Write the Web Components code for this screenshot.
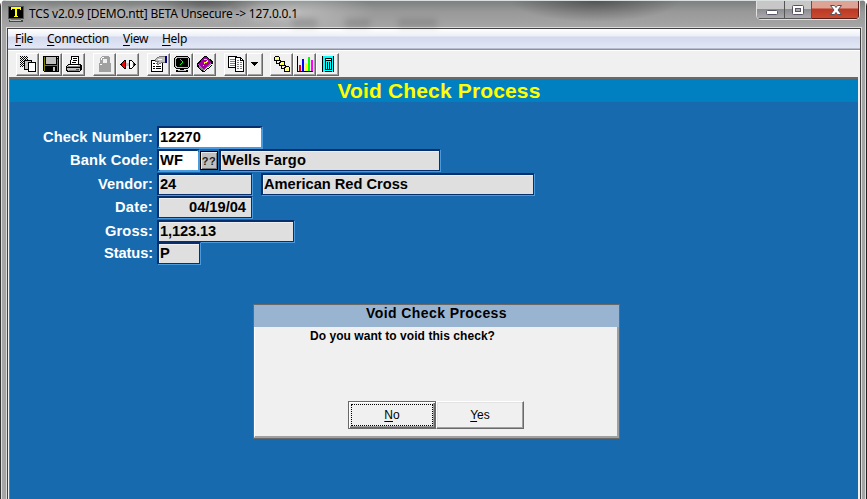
<!DOCTYPE html>
<html lang="en"><head><meta charset="utf-8"><title>TCS v2.0.9</title>
<style>html,body{margin:0;width:867px;height:499px;overflow:hidden}</style></head>
<body>
<tcs-window></tcs-window>
<script>
const define = (name, html, setup) => customElements.define(name, class extends HTMLElement {
  connectedCallback() {
    if (this.shadowRoot) return;
    this.attachShadow({mode:'open'}).innerHTML = html;
    if (setup) setup(this, this.shadowRoot);
  }
});

// Text set to a fixed advance width through letter spacing.
define('fit-text', `<style>:host{display:inline-block;white-space:pre}span{display:inline-block}</style><span><slot></slot></span>`, (el, root) => {
  const s = root.querySelector('span'), n = el.textContent.length, w = +el.getAttribute('w');
  el.style.width = w + 'px';
  s.style.letterSpacing = (w - s.getBoundingClientRect().width) / n + 'px';
});

const icons = {
app:`<path fill="#555" d="M0 0h16v13H0z"/><path fill="#000" d="M1 1h14v11H1z"/><path fill="#777" d="M3 13h10v1H3z"/><path fill="#444" d="M1 14h14v2H1z"/><path fill="#bbb" d="M2 14h11v1H2z"/><path fill="#ff0" d="M3 1h10v3h-1v-1H9v7h1v1H6v-1h1V3H4v1H3z"/>`,
copy:`<path stroke="#000" stroke-dasharray="1 1" d="M0 .5h8M0 2.5h8M0 4.5h8M0 6.5h5M0 8.5h5M0 10.5h5"/><path stroke="#000" stroke-dasharray="1 1" stroke-dashoffset="1" d="M0 1.5h9M0 3.5h8M0 5.5h5M0 7.5h5M0 9.5h5"/><path fill="#c0c0c0" stroke="#000" d="M4.5 4.5h7v9h-7z"/><path fill="#fff" stroke="#000" d="M8.500 6.500h7v9h-7z"/>`,
save:`<path fill="#000" d="M0 0h16v16H1L0 15z"/><path fill="#808000" d="M1 1h1v14H1zM14 3h1v12h-1zM2 9h12v1H2z"/><path fill="#c0c0c0" d="M3 1h10v7H3zM14 1h1v1h-1zM10 11h2v4h-2z"/>`,
print:`<path fill="#fff" stroke="#000" d="M5.500.5h7v8h-8z"/><path stroke="#000" d="M7 2.500h4M7 4.500h4M6 6.500h4"/><path fill="#c0c0c0" stroke="#000" d="M2.500 8.500h12l1 2v3l-2 2h-12l-1-2v-3z"/><path stroke="#808080" d="M2 10.500h12M3 14.500h10"/><path stroke="#000" d="M1 11.500h13M14.500 9v5"/><path stroke="#f00" d="M10 13.500h3"/><path stroke="#fff" d="M3 9.500h9"/>`,
lock:`<path fill="#a0a0a0" fill-rule="evenodd" d="M5 0h6l2 2v5h1v9H2V7h1V2zM6 3v4h4V3z"/><path stroke="#fff" d="M5 1.500h2M4.500 2v2M3 8.500h2"/>`,
plug:`<path fill="#f00" d="M1 7h1V6h1V5h2v7H3v-1H2v-1H1zM15 7h-1V6h-1v5h1v-1h1z"/><path stroke="#000" d="M0 8.500h1M1.500 7v3M2.500 6v1M2.500 10v1M3 5.500h1M3 11.500h1M4 4.500h2M4 12.500h2M5.500 4v9M9.500 4v9M9 4.500h3M9 12.500h3M12 5.500h1M12 11.500h1M13.500 6v1M13.500 10v1M14.500 7v3M15 8.500h1"/><path fill="#fff" d="M10 5h2v7h-2z"/><path fill="#c0c0c0" d="M6 7h3v3H6z"/>`,
props:`<path fill="#fff" stroke="#000" d="M.5 4.500h11v11H.5z"/><path stroke="#000" d="M2 7.500h2M2 10.500h2M5 10.500h5M2 12.500h2M5 12.500h5"/><path fill="#c0c0c0" stroke="#777" d="M5.500 2.500l3-2h6v6h-4l-3 2-2-1 2-2h-3v-2z"/><path stroke="#fff" d="M7 3.500h4"/><path stroke="#000080" stroke-width="2" d="M15 0v7"/>`,
monitor:`<path fill="#c0c0c0" stroke="#000" d="M2.500.5h11l2 2v8l-2 2h-11l-2-2v-8z"/><path fill="#000" d="M3 2h10l1 1v7l-1 1H3l-1-1V3zM6 12h4v2H6zM2 14h12v2H2z"/><path fill="#c0c0c0" d="M4 14h8v1H4z"/><path fill="#0f0" d="M6 3h1v1h1v1h1v2H8v1H7v1H6V8h1V7h1V5H7V4H6z"/>`,
book:`<path fill="#000" d="M7 0h2l7 5v2l-1 1v2l-8 6H5L0 11V8z"/><path fill="#808080" d="M2 9l5 4 7-6v2l-7 6-5-3z"/><path fill="#fff" d="M7 14l8-6v1l-8 6z"/><path fill="#a000a0" d="M7 1h2l6 5-8 7-6-4z"/><path stroke="#d05ee0" d="M1 8.500l3 2"/><path fill="#ff0" d="M7 3h3v1h1v2h-1v1H8v1H7V6h2V5h1V4H7zM6 9h1v1H6z"/>`,
pages:`<path fill="#fff" stroke="#000" d="M.5.500h8v11h-8z"/><path stroke="#808080" d="M2 3.500h5M2 5.500h5M2 7.500h5M2 9.500h5"/><path fill="#fff" stroke="#000" d="M7.500 1.500h5l3 3v11h-8z"/><path stroke="#808080" stroke-dasharray="2 1" d="M9 4.500h4M9 6.500h5M9 8.500h5M9 10.500h5M9 12.500h5"/><path stroke="#000" d="M12.500 1v3h3"/>`,
down:`<path d="M0 6h7v1H6v1H5v1H4v1H3V9H2V8H1V7H0z"/>`,
tree:`<path fill="#ffff80" stroke="#000" d="M1.500.500h3l1 1v3h-5v-3zM6.500 5.500h4v4h-5v-3zM11.500 10.500h3l1 1v4h-5v-4z"/><path stroke="#000" d="M0 4.500h6v2M5 9.500h6v2M2.500 5v2h3M7.500 10v2h3"/><path stroke="#ff0" d="M2 3.500h2M7 8.500h2M12 13.500h2"/>`,
bars:`<path stroke="#000" d="M.5 0v15.500H16"/><path fill="red" d="M2 9h2v6H2z"/><path fill="#00f" d="M5 3h2v12H5z"/><path fill="#ff0" d="M8 7h2v8H8z"/><path fill="#0f0" d="M11 1h2v14h-2z"/><path fill="#f0f" d="M14 4h2v11h-2z"/>`,
calc:`<path fill="#000" d="M2 0h12v16H2z"/><path fill="#0ff" d="M3 0h2v16H3zM12 0h1v16h-1zM3 0h10v2H3zM3 14h10v1H3z"/><path fill="#000" d="M5 2h7v12H5z"/><path fill="#ff0" d="M6 3h5v1H6z"/><path stroke="#0ff" d="M6.500 5v8M8.500 6v7M10.500 6v7M6 5.500h5"/>`
};
define('tcs-icon', `<style>:host{display:block;width:16px;height:16px}svg{display:block}</style><svg width="16" height="16" shape-rendering="crispEdges" fill="none"></svg>`, (el, r) => {
  const svg = r.querySelector('svg'); svg.innerHTML = icons[el.getAttribute('name')];
  if (el.getAttribute('name') === 'down') svg.setAttribute('fill', '#000');
});

define('title-bar', `<style>
:host{display:flex;height:27px;box-sizing:border-box;padding:0 1px 0 2px;align-items:flex-start;color:#000;font:12px "Noto Sans",sans-serif}
tcs-icon{margin:5px 5px 0 0}fit-text{margin-top:4px;line-height:17px;text-shadow:0 0 6px #ddd,0 0 8px #ccc}
.controls{margin-left:auto;display:flex;width:102px;height:18px;border:1px solid #e0e0e0;border-top:0;border-radius:0 0 5px 5px;overflow:hidden;box-shadow:inset 0 0 0 1px #555}
.controls div{height:18px;box-sizing:border-box;border:1px solid #555;border-width:0 1px 1px 0;background:linear-gradient(#c7c7c7 0 45%,#8d8d91 50%,#a9a9af)}
.min,.max{width:28px}.max{width:27px!important}.close{flex:1;background:linear-gradient(#dda496 0 40%,#bd3824 48%,#c94c30)!important;border-color:#5b1d18!important}
svg{display:block}</style>
<tcs-icon name="app"></tcs-icon><fit-text w="269">TCS v2.0.9 [DEMO.ntt] BETA Unsecure -&gt; 127.0.0.1</fit-text>
<div class="controls"><div class="min"><svg width="28" height="17"><rect x="9.500" y="9.500" width="11" height="4" rx="1" fill="#fff" stroke="#555566"/></svg></div><div class="max"><svg width="27" height="17"><rect x="7.500" y="4.500" width="11" height="9" rx="1" fill="#fff" stroke="#555566"/><rect x="10.500" y="7.500" width="5" height="3" fill="#aaa" stroke="#555566"/></svg></div><div class="close"><svg width="46" height="17"><path d="M18.500 4.500h4l1.500 2 1.500-2h4l-3.500 4.500 3.500 4.500h-4L24 11.500l-1.500 2h-4L22 9z" fill="#fff" stroke="#55505c"/></svg></div></div>`);

define('menu-bar', `<style>:host{display:flex;gap:14px;box-sizing:border-box;height:20px;padding-left:7px;background:linear-gradient(#fff,#eceff8 7px,#d4daec 8px,#e0e6f6 18px);border-bottom:1px solid #b6bccc;font:12px/20px "Noto Sans",sans-serif;color:#000}
u{text-underline-offset:2px}</style>
<fit-text w="18"><u>F</u>ile</fit-text><fit-text w="62"><u>C</u>onnection</fit-text><fit-text w="25"><u>V</u>iew</fit-text><fit-text w="25"><u>H</u>elp</fit-text>`);

define('tool-button', `<style>:host{display:block;box-sizing:border-box;width:23px;height:23px;padding:2px 3px 3px;border:1px solid;border-color:#fff #696969 #696969 #fff;box-shadow:inset -1px -1px #a0a0a0;background:#f0f0f0;overflow:hidden}
:host([icon=down]){width:16px;padding-left:3px}</style><tcs-icon></tcs-icon>`, (el, r) => {
  const i = document.createElement('tcs-icon'); i.setAttribute('name', el.getAttribute('icon')); r.querySelector('tcs-icon').replaceWith(i);
});

define('tool-bar', `<style>:host{display:flex;gap:8px;box-sizing:border-box;height:28px;border-top:1px solid #919191;box-shadow:inset 0 1px #fff;padding:3px 0 0 8px;background:#f0f0f0}div{display:flex}</style>`
 + [['copy','save','print'],['lock','plug'],['props','monitor','book'],['pages','down'],['tree','bars','calc']].map((g,i)=>`<div${i===4?' style="margin-left:-1px"':''}>`+g.map(n=>`<tool-button icon="${n}"></tool-button>`).join('')+'</div>').join(''));

define('data-field', `<style>:host{display:block;box-sizing:border-box;height:23px;border:1px solid;border-color:#062f6d #4a9ae0 #4a9ae0 #062f6d;padding:1px}
div{box-sizing:border-box;height:19px;padding-left:1px;background:#dfdfdf;font:bold 14.670px/19px "Liberation Sans",Arial,sans-serif;color:#000;box-shadow:0 0 0 1px #062f6d,inset 1px 1px #eee;white-space:nowrap}
:host([editable]) div{background:#fff;box-shadow:-1px -1px #062f6d,1px 1px #4a9ae0}
:host([right]) div{text-align:right;padding-right:5px}</style><div><slot></slot></div>`);

define('lookup-button', `<style>:host{display:block;box-sizing:border-box;width:18px;height:19px;margin:2px 1px 0 0;border:1px solid #000;background:#c0c0c0;box-shadow:inset 1px 1px #e8e8e8,inset -1px -1px #777;text-align:center;font:bold 11px/18px "Liberation Sans",sans-serif;color:#222;letter-spacing:.5px}</style><slot></slot>`);

define('form-row', `<style>:host{display:flex;height:23px;color:#fff;font:bold 14.670px/23px "Liberation Sans",Arial,sans-serif}.label{width:143px;margin-right:4px;text-align:right;white-space:nowrap}</style><div class="label"></div><slot></slot>`, (el,r) => {
  const f=document.createElement('fit-text'); f.textContent=el.getAttribute('label'); f.setAttribute('w',el.getAttribute('lw')); r.querySelector('.label').append(f);
});

define('check-form', `<style>:host{display:grid;grid-template-rows:23px 24px 23px 24px 22px 23px;padding-top:24px;height:140px}</style>
<form-row label="Check Number:" lw="110"><data-field editable style="width:106px"><fit-text w="41">12270</fit-text></data-field></form-row>
<form-row label="Bank Code:" lw="83"><data-field editable style="width:43px"><fit-text w="23">WF</fit-text></data-field><lookup-button>??</lookup-button><data-field style="width:222px"><fit-text w="84">Wells Fargo</fit-text></data-field></form-row>
<form-row label="Vendor:" lw="55"><data-field style="width:96px;margin-right:8px"><fit-text w="16">24</fit-text></data-field><data-field style="width:274px"><fit-text w="144">American Red Cross</fit-text></data-field></form-row>
<form-row label="Date:" lw="38"><data-field right style="width:96px"><fit-text w="57">04/19/04</fit-text></data-field></form-row>
<form-row label="Gross:" lw="48"><data-field style="width:138px"><fit-text w="56">1,123.13</fit-text></data-field></form-row>
<form-row label="Status:" lw="49"><data-field style="width:44px"><fit-text w="10">P</fit-text></data-field></form-row>`);

define('dialog-button', `<style>:host{display:flex;align-items:center;justify-content:center;box-sizing:border-box;width:88px;height:28px;border:1px solid;border-color:#fff #696969 #696969 #fff;box-shadow:inset -1px -1px #a0a0a0,inset 1px 1px #e3e3e3;background:#f0f0f0;font:12px/16px "Liberation Sans",sans-serif;color:#000}
:host([focused]){border-color:#696969;box-shadow:inset 1px 1px #fff,inset -1px -1px #696969,inset -2px -2px #a0a0a0}:host([focused]) div{border:1px dotted #000}
div{width:80px;height:20px;border:1px solid transparent;text-align:center;line-height:21px}::slotted(u){text-underline-offset:2px}</style><div><slot></slot></div>`);

define('confirm-dialog', `<style>:host{position:absolute;left:253px;top:304px;box-sizing:border-box;width:367px;height:135px;border:1px solid #696969;background:#f0f0f0;color:#000;display:flex;flex-direction:column}
.head{height:22px;background:#99b4d1;text-align:center;font:bold 14px/17px "Liberation Sans",sans-serif}
.body{flex:1;border:solid;border-width:0 2px 2px 1px;border-color:#a0a0a0 #a0a0a0 #a0a0a0 #fff;display:flex;flex-direction:column;padding:0 0 7px;font:bold 12px/17px "Liberation Sans",sans-serif}
.message{padding:1px 0 0 55px}.actions{display:flex;margin:auto 0 0 93px}</style>
<div class="head"><fit-text w="141">Void Check Process</fit-text></div><div class="body"><div class="message"><fit-text w="185">Do you want to void this check?</fit-text></div><div class="actions"><dialog-button focused><u>N</u>o</dialog-button><dialog-button><u>Y</u>es</dialog-button></div></div>`);

define('tcs-window', `<style>
:host{display:block;position:relative;box-sizing:border-box;width:867px;height:499px;padding:1px 6px 0 6px;overflow:hidden;border-top:0;
background:linear-gradient(90deg,#333 0 1px,#ddd 1px 2px,transparent 2px 865px,#ddd 865px 866px,#222 866px),radial-gradient(ellipse 75px 25px at 300px 12px,#ccc9,#ccc0),radial-gradient(ellipse 55px 20px at 205px 2px,#4448,#4440),radial-gradient(ellipse 85px 22px at 595px 0,#3339,#3330),linear-gradient(#60656499 0,#999 12px,#a5a5a5 27px),#a5a5a5;
border-radius:6px 6px 0 0}
:host::before{content:"";position:absolute;left:0;top:0;right:0;height:1px;background:#d9e0df}
.smudge{position:absolute;left:292px;top:19px;display:flex;gap:28px;filter:blur(3px);opacity:.35}.smudge i{width:25px;height:8px;background:#666}.smudge i:last-child{width:39px}
.client{box-sizing:border-box;height:475px;margin-top:-1px;border:1px solid #ddd;border-bottom:0;padding:1px 0 0;background:#404040;width:856px}
.inner{box-sizing:border-box;width:852px;height:473px;margin-left:1px;background:#f0f0f0;display:flex;flex-direction:column}
.work{margin-right:2px;flex:1;border:solid #696969;border-width:2px 0 0 1px;border-left-color:#777;background:#176aae;margin-left:1px}
.banner{height:23px;background:#0080c0;color:#ff0;font:bold 21px/24px "Liberation Sans",Arial,sans-serif;text-align:center}.banner fit-text{margin-left:10px}
</style><div class="smudge"><i></i><i></i><i></i></div><title-bar></title-bar><div class="client"><div class="inner"><menu-bar></menu-bar><tool-bar></tool-bar><div class="work"><div class="banner"><fit-text w="203">Void Check Process</fit-text></div><check-form></check-form></div></div></div><confirm-dialog></confirm-dialog>`);
</script></body></html>
